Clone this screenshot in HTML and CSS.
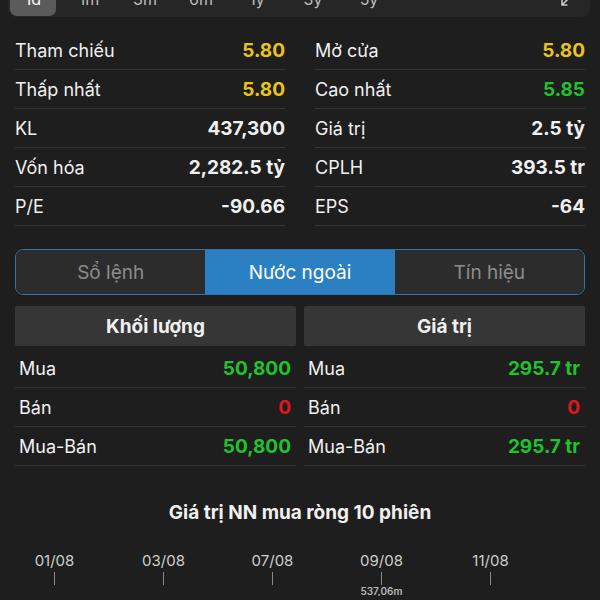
FILE: index.html
```html
<!DOCTYPE html>
<html>
    <head>
        <meta charset = utf-8>
        <meta name = viewport content = 'width = device-width, initial-scale = 1'>
        <title>Chi tiết</title>

        <link rel="stylesheet" href="styles.css">
    </head>

    <body>
        <div class = periods>
            <span class = "period active">1d</span>
            <span class = period>1m</span>
            <span class = period>3m</span>
            <span class = period>6m</span>
            <span class = period>1y</span>
            <span class = period>3y</span>
            <span class = period>5y</span>
            <svg class = collapse width = 12 height = 12 viewBox = "0 0 12 12">
                <path d = "M10.5 1.5 L2 10 M2 4.5 V10 H7.5" fill = none stroke = "#c8c8c8" stroke-width = 1.6 />
            </svg>
        </div>

        <div class = stats>
            <div class = stat><span>Tham chiếu</span><b class = ref>5.80</b></div>
            <div class = stat><span>Mở cửa</span><b class = ref>5.80</b></div>
            <div class = stat><span>Thấp nhất</span><b class = ref>5.80</b></div>
            <div class = stat><span>Cao nhất</span><b class = up>5.85</b></div>
            <div class = stat><span>KL</span><b>437,300</b></div>
            <div class = stat><span>Giá trị</span><b>2.5 tỷ</b></div>
            <div class = stat><span>Vốn hóa</span><b>2,282.5 tỷ</b></div>
            <div class = stat><span>CPLH</span><b>393.5 tr</b></div>
            <div class = stat><span>P/E</span><b>-90.66</b></div>
            <div class = stat><span>EPS</span><b>-64</b></div>
        </div>

        <div class = tabs>
            <span class = tab>Sổ lệnh</span>
            <span class = "tab active">Nước ngoài</span>
            <span class = tab>Tín hiệu</span>
        </div>

        <div class = foreign>
            <div class = column>
                <div class = head>Khối lượng</div>
                <div class = row><span>Mua</span><b class = up>50,800</b></div>
                <div class = row><span>Bán</span><b class = down>0</b></div>
                <div class = row><span>Mua-Bán</span><b class = up>50,800</b></div>
            </div>
            <div class = column>
                <div class = head>Giá trị</div>
                <div class = row><span>Mua</span><b class = up>295.7 tr</b></div>
                <div class = row><span>Bán</span><b class = down>0</b></div>
                <div class = row><span>Mua-Bán</span><b class = up>295.7 tr</b></div>
            </div>
        </div>

        <h3 class = title>Giá trị NN mua ròng 10 phiên</h3>

        <div class = chart>
            <div class = day>01/08<i></i></div>
            <div class = day>03/08<i></i></div>
            <div class = day>07/08<i></i></div>
            <div class = day>09/08<i></i><small>537,06m</small></div>
            <div class = day>11/08<i></i></div>
        </div>
    </body>
</html>
```

FILE: styles.css
```css
html {
    background-color: #1e1e1e;
}

body {
    margin: 0;
    color: #f0f0f0;
    font-family: Inter, "Noto Sans", sans-serif;
    overflow: hidden
}

.periods {
    display: flex;
    align-items: center;
    gap: 10px;
    height: 36px;
    margin: -19px 10px 0 8px;
    padding: 1px 2px;
    box-sizing: border-box;
    background: #262626;
    border-radius: 8px
}

.period {
    width: 46px;
    line-height: 34px;
    text-align: center;
    font-size: 16px;
    color: #bdbdbd;
    border-radius: 7px
}

.period.active {
    background: #5b5b5b;
    color: #fff
}

.collapse {margin: 4px 16px 0 auto}

.stats {
    display: grid;
    grid-template-columns: 1fr 1fr;
    column-gap: 30px;
    margin-top: 14px;
    padding: 0 15px
}

.stat, .row {
    display: flex;
    justify-content: space-between;
    align-items: center;
    height: 38px;
    border-bottom: 1px solid #343434;
    font-size: 18px
}

b {
    font-size: 19px;
    font-weight: 700
}

.ref {color: #e9c51b}
.up {color: #22c12e}
.down {color: #e0161c}

.tabs {
    display: grid;
    grid-template-columns: 1fr 1fr 1fr;
    height: 44px;
    margin: 23px 15px 0;
    border: 1px solid #2f76a8;
    border-radius: 8px;
    overflow: hidden
}

.tab {
    display: flex;
    align-items: center;
    justify-content: center;
    background: #2c2c2c;
    color: #8c8c8c;
    font-size: 19px
}

.tab.active {
    background: #2a80c2;
    color: #fff
}

.foreign {
    display: grid;
    grid-template-columns: 1fr 1fr;
    column-gap: 8px;
    margin-top: 11px;
    padding: 0 15px
}

.head {
    display: flex;
    align-items: center;
    justify-content: center;
    height: 40px;
    margin-bottom: 3px;
    background: #363636;
    border-radius: 2px;
    font-size: 19px;
    font-weight: 700
}

.row {padding: 0 5px 0 4px}

.title {
    margin: 36px 0 0;
    text-align: center;
    font-size: 19px;
    line-height: 22px;
    font-weight: 700
}

.chart {
    display: grid;
    grid-template-columns: repeat(5, 109px);
    margin-top: 28px
}

.day {
    display: flex;
    flex-direction: column;
    align-items: center;
    font-size: 15px;
    line-height: 18px;
    color: #cfcfcf
}

.day i {
    width: 1px;
    height: 13px;
    margin-top: 2px;
    background: #8a8a8a
}

.day small {
    margin-top: 1px;
    font-size: 10px;
    line-height: 10px;
    font-weight: 600;
    color: #b8b8b8
}
```
